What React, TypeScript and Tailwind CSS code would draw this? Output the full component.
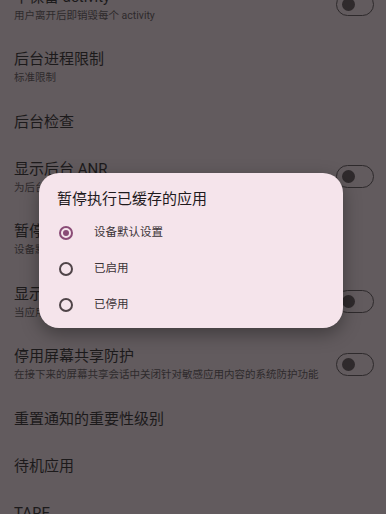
import { useState } from "react";

interface Item {
  title: string;
  summary?: string;
  toggle?: boolean;
}

const ITEMS: Item[] = [
  { title: "不保留 activity", summary: "用户离开后即销毁每个 activity", toggle: true },
  { title: "后台进程限制", summary: "标准限制" },
  { title: "后台检查" },
  { title: "显示后台 ANR", summary: "为后台应用显示“应用无响应”对话框", toggle: true },
  { title: "暂停执行已缓存的应用", summary: "设备默认设置" },
  { title: "显示通知渠道警告", summary: "当应用未经有效渠道发布通知时，在屏幕上显示警告", toggle: true },
  { title: "停用屏幕共享防护", summary: "在接下来的屏幕共享会话中关闭针对敏感应用内容的系统防护功能", toggle: true },
  { title: "重置通知的重要性级别" },
  { title: "待机应用" },
  { title: "TARE" },
];

const OPTIONS = ["设备默认设置", "已启用", "已停用"];

const FONT = { fontFamily: 'Roboto, "Noto Sans CJK SC", sans-serif' };

function Switch() {
  return (
    <div className="w-[38px] h-[23px] rounded-full border-[1.5px] border-[#2e2a2c] flex items-center pl-[5px] shrink-0">
      <div className="w-[13px] h-[13px] rounded-full bg-[#2f2a2c]" />
    </div>
  );
}

function Row({ item }: { item: Item }) {
  return (
    <div
      className={
        item.summary
          ? "flex items-center justify-between pl-[14px] pr-[12px] py-[12px]"
          : "flex items-center justify-between pl-[14px] pr-[12px] py-[12.5px]"
      }
    >
      <div className="min-w-0">
        <div className="text-[15px] leading-[22px] text-[#1c1a1b] whitespace-nowrap">{item.title}</div>
        {item.summary && (
          <div className="text-[10.5px] leading-[16.5px] text-[#2e2a2c] whitespace-nowrap">{item.summary}</div>
        )}
      </div>
      {item.toggle && <Switch />}
    </div>
  );
}

export default function App() {
  const [selected, setSelected] = useState(0);

  return (
    <div className="relative w-[386px] h-[514px] overflow-hidden bg-[#625b5e]" style={FONT}>

      <div className="mt-[-26.5px]">
        {ITEMS.map((item) => (
          <Row key={item.title} item={item} />
        ))}
      </div>

      {/* dialog */}
      <div className="absolute left-[39px] top-[173px] w-[304px] h-[155px] rounded-[20px] bg-[#f5e4eb] shadow-[0_6px_18px_rgba(0,0,0,0.35)] pt-[15px] pb-[5px]">

        <div className="pl-[18px] text-[15px] leading-[22px] text-[#1f1a1d]">
          暂停执行已缓存的应用
        </div>

        <div className="mt-[5px]">
          {OPTIONS.map((label, i) => (
            <button
              key={label}
              onClick={() => setSelected(i)}
              className="w-full h-[36px] flex items-center pl-[20px] text-left"
            >
              <span
                className={
                  i === selected
                    ? "w-[14px] h-[14px] rounded-full border-2 border-[#8a4b76] flex items-center justify-center"
                    : "w-[14px] h-[14px] rounded-full border-2 border-[#4f4448] flex items-center justify-center"
                }
              >
                {i === selected && <span className="w-[6px] h-[6px] rounded-full bg-[#8a4b76]" />}
              </span>
              <span className="ml-[21px] text-[11.5px] text-[#3b3337]">{label}</span>
            </button>
          ))}
        </div>

      </div>

    </div>
  );
}
